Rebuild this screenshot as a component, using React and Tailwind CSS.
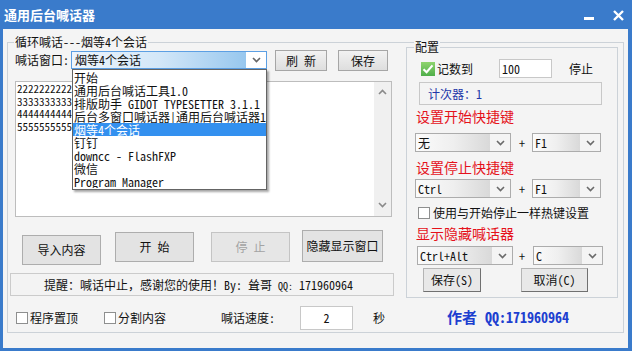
import React from "react";

function Chevron({ up = false, color = "#5a5a5a" }) {
  return (
    <svg width="9" height="6" viewBox="0 0 9 6">
      <path
        d={up ? "M1 5 L4.5 1.5 L8 5" : "M1 1 L4.5 4.5 L8 1"}
        fill="none"
        stroke={color}
        strokeWidth="1.6"
      />
    </svg>
  );
}

function Combo({ text, cls }) {
  return (
    <div className={"flex h-[19px] border border-[#acacac] bg-white " + cls}>
      <div className="flex-1 flex items-center pl-[2px] text-[12px] leading-[17px] bg-linear-to-r from-[#fbfbfb] via-[#efefef] to-[#d9d9d9]">
        {text}
      </div>
      <div className="w-[20px] flex items-center justify-center bg-[#f4f4f4]">
        <Chevron color="#6a6a6a" />
      </div>
    </div>
  );
}

function Box() {
  return <span className="block w-[12px] h-[12px] border border-[#8e8f8f] bg-white shrink-0" />;
}

function GreenCheck() {
  return (
    <svg width="14" height="14" viewBox="0 0 14 14" className="shrink-0">
      <defs>
        <linearGradient id="gc" x1="0" y1="0" x2="0" y2="1">
          <stop offset="0" stopColor="#8fd46e" />
          <stop offset="1" stopColor="#4fae4a" />
        </linearGradient>
      </defs>
      <rect x="0" y="0" width="14" height="14" fill="url(#gc)" />
      <path d="M2.5 7.2 L5.6 10.2 L11.5 3.4" fill="none" stroke="#ffffff" strokeWidth="2.2" />
    </svg>
  );
}

export default function App() {
  const items = [
    "开始",
    "通用后台喊话工具1.0",
    "排版助手 GIDOT TYPESETTER 3.1.1",
    "后台多窗口喊话器|通用后台喊话器1",
    "烟等4个会话",
    "钉钉",
    "downcc - FlashFXP",
    "微信",
    "Program Manager",
  ];
  return (
    <div className="w-[632px] h-[351px] bg-[#3a7bcb] flex flex-col overflow-hidden font-['Noto_Sans_Mono_CJK_SC','Noto_Sans_CJK_SC',sans-serif] text-[#111] text-[12px]">
      {/* title bar */}
      <div className="h-[29px] shrink-0 flex items-center pl-[4px] pr-[8px]">
        <div className="text-white font-bold text-[13px] leading-[16px] tracking-[0px]">通用后台喊话器</div>
        <div className="flex-1" />
        <div className="w-[10px] h-[3px] bg-white mt-[7px]" />
        <div className="ml-[19px] w-[11px] h-[11px] mt-[1px]">
          <svg width="11" height="11" viewBox="0 0 11 11">
            <path d="M1 1 L10 10 M10 1 L1 10" stroke="#ffffff" strokeWidth="2.4" />
          </svg>
        </div>
      </div>

      {/* client area */}
      <div className="flex-1 ml-[3px] mr-[4px] mb-[3px] bg-[#f4f4f4] flex flex-col">
        <div className="relative mt-[13px] ml-[4px] w-[617px] h-[291px] border border-[#ccd2d8] flex items-start">
          <div className="absolute left-[6px] top-[-9px] px-[1px] bg-[#f4f4f4] leading-[16px]">
            循环喊话---烟等4个会话
          </div>

          {/* left column */}
          <div className="w-[398px] flex flex-col">
            <div className="mt-[7px] h-[21px] flex items-start">
              <div className="ml-[7px] w-[56px] leading-[19px]">喊话窗口:</div>
              <div className="relative mt-[1px] w-[196px] h-[18px] flex border border-[#5c9fe3] bg-white">
                <div className="flex-1 flex items-center pl-[3px] leading-[16px] bg-linear-to-r from-[#eef5fc] via-[#d3e7f8] to-[#97c7ee]">
                  烟等4个会话
                </div>
                <div className="w-[20px] flex items-center justify-center bg-white">
                  <Chevron color="#666" />
                </div>
                {/* dropdown list */}
                <div className="absolute left-0 top-[17px] w-[195px] border border-[#646464] bg-white pt-[1px] pb-[1px] shadow-[2px_2px_2px_rgba(0,0,0,0.35)] z-10">
                  {items.map((t, i) => (
                    <div
                      key={i}
                      className={
                        "h-[13px] leading-[13px] pl-[1px] whitespace-nowrap overflow-hidden " +
                        (i === 4 ? "bg-[#3390ef] text-white" : "")
                      }
                    >
                      {t}
                    </div>
                  ))}
                </div>
              </div>
              <button className="ml-[8px] w-[52px] h-[21px] border border-[#a6a6a6] bg-linear-to-b from-[#f2f2f2] to-[#dedede] leading-[19px]">
                刷 新
              </button>
              <button className="ml-[11px] w-[50px] h-[21px] border border-[#a6a6a6] bg-linear-to-b from-[#f2f2f2] to-[#dedede] leading-[19px]">
                保存
              </button>
            </div>

            {/* textarea */}
            <div className="mt-[10px] ml-[7px] w-[377px] h-[136px] border border-[#bdbdbd] bg-white flex">
              <div className="flex-1 pl-[1px] pt-[0px] text-[11px] leading-[12.5px]">
                <div>2222222222</div>
                <div>3333333333</div>
                <div>4444444444</div>
                <div>5555555555</div>
              </div>
              <div className="w-[17px] bg-[#f0f0f0] flex flex-col items-center justify-between pt-[7px] pb-[8px]">
                <Chevron up color="#8a8a8a" />
                <Chevron color="#8a8a8a" />
              </div>
            </div>

            {/* buttons */}
            <div className="mt-[13px] h-[35px] flex items-start">
              <button className="ml-[14px] mt-[5px] w-[79px] h-[30px] border border-[#adadad] bg-[#e3e3e3]">
                导入内容
              </button>
              <button className="ml-[14px] mt-[2px] w-[79px] h-[30px] border border-[#adadad] bg-[#e3e3e3]">
                开 始
              </button>
              <button className="ml-[17px] mt-[2px] w-[79px] h-[30px] border border-[#c4c4c4] bg-[#e6e6e6] text-[#a3a3a3]">
                停 止
              </button>
              <button className="ml-[12px] w-[81px] h-[32px] border border-[#adadad] bg-[#e3e3e3]">
                隐藏显示窗口
              </button>
            </div>

            {/* hint */}
            <div className="mt-[8px] ml-[2px] w-[384px] h-[23px] border border-[#cbcbcb] bg-[#f3f3f3] pl-[33px] leading-[21px] whitespace-nowrap">
              提醒：喊话中止，感谢您的使用！By: 耸哥 <span className="text-[10px]">QQ:</span> 171960964
            </div>

            {/* bottom row */}
            <div className="mt-[9px] h-[25px] flex items-center">
              <span className="ml-[8px]"><Box /></span>
              <span className="ml-[2px] w-[48px]">程序置顶</span>
              <span className="ml-[26px]"><Box /></span>
              <span className="ml-[2px] w-[48px]">分割内容</span>
              <span className="ml-[55px] w-[54px]">喊话速度:</span>
              <div className="ml-[25px] w-[53px] h-[24px] border border-[#c8c8c8] bg-white flex items-center justify-center">
                2
              </div>
              <span className="ml-[20px]">秒</span>
            </div>
          </div>

          {/* right column */}
          <div className="flex flex-col">
            <div className="relative mt-[4px] w-[212px] h-[251px] border border-[#ccd2d8] flex flex-col">
              <div className="absolute left-[7px] top-[-9px] px-[1px] bg-[#f4f4f4] leading-[16px]">配置</div>

              <div className="mt-[11px] h-[19px] flex items-center">
                <span className="ml-[14px]"><GreenCheck /></span>
                <span className="ml-[2px] w-[36px]">记数到</span>
                <div className="ml-[26px] w-[53px] h-[19px] border border-[#c8c8c8] bg-white pl-[2px] leading-[17px]">100</div>
                <span className="ml-[17px]">停止</span>
              </div>

              <div className="mt-[4px] ml-[12px] w-[183px] h-[23px] border border-[#c8c8c8] pl-[8px] leading-[21px] text-[#2236a8]">
                计次器：1
              </div>

              <div className="mt-[2px] ml-[9px] text-[14px] leading-[18px] text-[#e5121b]">设置开始快捷键</div>
              <div className="mt-[8px] h-[19px] flex items-center">
                <Combo text="无" cls="ml-[8px] w-[96px]" />
                <span className="ml-[8px] w-[6px]">+</span>
                <Combo text="F1" cls="ml-[7px] w-[69px]" />
              </div>

              <div className="mt-[6px] ml-[9px] text-[14px] leading-[18px] text-[#e5121b]">设置停止快捷键</div>
              <div className="mt-[3px] h-[19px] flex items-center">
                <Combo text="Ctrl" cls="ml-[8px] w-[96px]" />
                <span className="ml-[8px] w-[6px]">+</span>
                <Combo text="F1" cls="ml-[7px] w-[69px]" />
              </div>

              <div className="mt-[8px] h-[14px] flex items-center">
                <span className="ml-[11px]"><Box /></span>
                <span className="ml-[3px]">使用与开始停止一样热键设置</span>
              </div>

              <div className="mt-[4px] ml-[9px] text-[14px] leading-[18px] text-[#e5121b]">显示隐藏喊话器</div>
              <div className="mt-[4px] h-[19px] flex items-center">
                <Combo text="Ctrl+Alt" cls="ml-[10px] w-[96px]" />
                <span className="ml-[6px] w-[6px]">+</span>
                <Combo text="C" cls="ml-[8px] w-[70px]" />
              </div>

              <div className="mt-[3px] h-[24px] flex items-center">
                <button className="ml-[16px] w-[58px] h-[24px] border border-[#b4b4b4] border-r-[#707070] border-b-[#707070] bg-[#e8e8e8]">
                  保存(S)
                </button>
                <button className="ml-[40px] w-[67px] h-[24px] border border-[#b4b4b4] border-r-[#707070] border-b-[#707070] bg-[#e8e8e8]">
                  取消(C)
                </button>
              </div>
            </div>

            <div className="mt-[9px] ml-[41px] h-[20px] flex items-center font-bold text-[#1d3fd0] whitespace-nowrap">
              <span className="text-[15px]">作者</span>
              <span className="ml-[8px] text-[14px]">QQ:171960964</span>
            </div>
          </div>
        </div>
      </div>
    </div>
  );
}
